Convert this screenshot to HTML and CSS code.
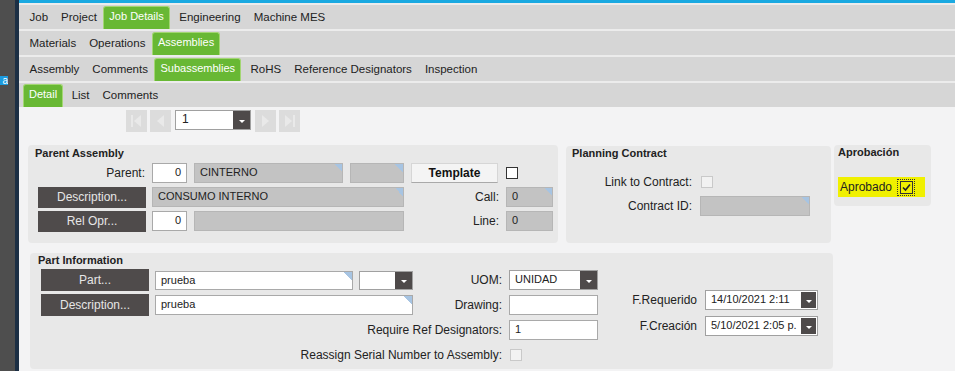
FILE: index.html
```html
<!DOCTYPE html>
<html>
<head>
	<meta charset="UTF-8">
	<title>Job Entry - Subassemblies</title>
	<link rel="stylesheet" href="styles.css">
</head>
<body>
	<div class="app">
		<div class="sidebar"><span class="side-badge">a</span></div>
		<div class="main">
			<div class="tabs">
				<div class="tab-row">
					<span class="tab">Job</span>
					<span class="tab">Project</span>
					<span class="tab active">Job Details</span>
					<span class="tab">Engineering</span>
					<span class="tab">Machine MES</span>
				</div>
				<div class="tab-row">
					<span class="tab">Materials</span>
					<span class="tab">Operations</span>
					<span class="tab active">Assemblies</span>
				</div>
				<div class="tab-row">
					<span class="tab">Assembly</span>
					<span class="tab">Comments</span>
					<span class="tab active">Subassemblies</span>
					<span class="tab">RoHS</span>
					<span class="tab">Reference Designators</span>
					<span class="tab">Inspection</span>
				</div>
				<div class="tab-row">
					<span class="tab active">Detail</span>
					<span class="tab">List</span>
					<span class="tab">Comments</span>
				</div>
			</div>

			<div class="content">
				<div class="nav">
					<span class="nav-btn">
						<svg width="21" height="22" viewBox="0 0 21 22"><rect x="5" y="5" width="2" height="12" fill="#e9e9e9"/><path d="M15 5 L8 11 L15 17 Z" fill="#e9e9e9"/></svg>
					</span>
					<span class="nav-btn">
						<svg width="21" height="22" viewBox="0 0 21 22"><path d="M14 5 L7 11 L14 17 Z" fill="#e9e9e9"/></svg>
					</span>
					<span class="combo nav-combo">
						<span class="combo-text">1</span>
						<span class="combo-btn"><i class="arrow"></i></span>
					</span>
					<span class="nav-btn">
						<svg width="21" height="22" viewBox="0 0 21 22"><path d="M7 5 L14 11 L7 17 Z" fill="#e9e9e9"/></svg>
					</span>
					<span class="nav-btn">
						<svg width="21" height="22" viewBox="0 0 21 22"><path d="M6 5 L13 11 L6 17 Z" fill="#e9e9e9"/><rect x="14" y="5" width="2" height="12" fill="#e9e9e9"/></svg>
					</span>
				</div>

				<div class="groups">
					<div class="group parent">
						<div class="group-title">Parent Assembly</div>
						<div class="rows">
							<div class="row">
								<span class="label-cell">Parent:</span>
								<span class="field num w35 gap6">0</span>
								<span class="field gray corner w149 gap7">CINTERNO</span>
								<span class="field gray corner w54 gap7"></span>
								<span class="btn-light gap7">Template</span>
								<span class="check gap8"></span>
							</div>
							<div class="row">
								<span class="btn-dark">Description...</span>
								<span class="field gray corner w252 gap6">CONSUMO INTERNO</span>
								<span class="side-label">Call:</span>
								<span class="field gray corner w47 gap7">0</span>
							</div>
							<div class="row">
								<span class="btn-dark">Rel Opr...</span>
								<span class="field num w35 gap6">0</span>
								<span class="field gray w210 gap7"></span>
								<span class="side-label">Line:</span>
								<span class="field gray w47 gap7">0</span>
							</div>
						</div>
					</div>

					<div class="group planning">
						<div class="group-title">Planning Contract</div>
						<div class="rows contract-rows">
							<div class="row">
								<span class="contract-label">Link to Contract:</span>
								<span class="check disabled contract-check"></span>
							</div>
							<div class="row">
								<span class="contract-label">Contract ID:</span>
								<span class="field gray corner w110 gap8"></span>
							</div>
						</div>
					</div>

					<div class="group approval">
						<div class="group-title">Aprobación</div>
						<div class="approved">
							<span>Aprobado</span>
							<span class="focus-box">
								<span class="check checked">
									<svg width="11" height="11" viewBox="0 0 11 11"><path d="M2 5.5 L4.5 8 L9 2.5" fill="none" stroke="#222" stroke-width="1.6"/></svg>
								</span>
							</span>
						</div>
					</div>
				</div>

				<div class="group part">
					<div class="group-title">Part Information</div>
					<div class="part-body">
						<div class="part-grid">
							<div class="cell-a">
								<span class="btn-dark tall">Part...</span>
								<span class="field corner w198 h19 gap6">prueba</span>
								<span class="combo w54 h19 gap6">
									<span class="combo-text"></span>
									<span class="combo-btn"><i class="arrow"></i></span>
								</span>
							</div>
							<span class="grid-label">UOM:</span>
							<span class="combo w89">
								<span class="combo-text">UNIDAD</span>
								<span class="combo-btn"><i class="arrow"></i></span>
							</span>

							<div class="cell-a">
								<span class="btn-dark tall">Description...</span>
								<span class="field corner w258 gap6">prueba</span>
							</div>
							<span class="grid-label">Drawing:</span>
							<span class="field w89"></span>

							<span class="grid-label wide">Require Ref Designators:</span>
							<span class="field w89">1</span>

							<span class="grid-label wide">Reassign Serial Number to Assembly:</span>
							<span class="check disabled reassign-check"></span>
						</div>

						<div class="date-grid">
							<span class="date-label">F.Requerido</span>
							<span class="combo date-combo">
								<span class="combo-text">14/10/2021 2:11</span>
								<span class="combo-btn"><i class="arrow"></i></span>
							</span>
							<span class="date-label">F.Creación</span>
							<span class="combo date-combo">
								<span class="combo-text">5/10/2021 2:05 p.</span>
								<span class="combo-btn"><i class="arrow"></i></span>
							</span>
						</div>
					</div>
				</div>
			</div>
		</div>
	</div>
</body>
</html>
```

FILE: styles.css
```css
body {
	margin: 0;
	font-family: "Liberation Sans", Arial, sans-serif;
	font-size: 12px;
	color: #222;
	overflow: hidden;
}
.app {
	display: flex;
	height: 100vh;
}
.sidebar {
	flex: none;
	width: 15px;
	padding-top: 76px;
	background-color: #4e4e4e;
	border-right: 4px solid #1c2f44;
}
.side-badge {
	display: block;
	width: 8px;
	height: 9px;
	background-color: #1b9be0;
	color: #fff;
	font-size: 10px;
	line-height: 9px;
	text-align: right;
	overflow: hidden;
}
.main {
	flex: 1;
	background-color: #f3f3f4;
	border-top: 3px solid #1aa9e1;
}

/* tab strips */
.tabs {
	display: flex;
	flex-direction: column;
	gap: 2px;
	padding-top: 2px;
	background-color: #ececec;
}
.tab-row {
	display: flex;
	align-items: flex-end;
	height: 24px;
	padding-left: 4px;
	background-color: #d6d6d6;
}
.tab {
	height: 23px;
	line-height: 23px;
	padding: 0 6.5px;
	font-size: 11.5px;
	color: #222;
	white-space: nowrap;
}
.tab.active {
	box-sizing: border-box;
	margin-right: 3px;
	padding: 0 5px;
	border: 1px solid #a3d673;
	border-bottom: none;
	border-radius: 3px 3px 0 0;
	background-color: #68b834;
	color: #fff;
	font-size: 11px;
	line-height: 19px;
}
.tab-row .tab.active:first-child {
	margin-right: 2px;
}

.content {
	padding: 3px 0 0 9px;
}

/* record navigator */
.nav {
	display: flex;
	gap: 3px;
	height: 22px;
	margin-left: 98px;
}
.nav-btn {
	width: 21px;
	height: 22px;
	background-color: #dcdcdc;
}
.nav-btn svg {
	display: block;
}
.nav-combo {
	width: 76px;
	height: 21px;
	margin: 0 1px;
}
.nav-combo .combo-text {
	font-size: 12px;
	padding-left: 6px;
}

/* group boxes */
.groups {
	display: flex;
	align-items: flex-start;
	margin-top: 13px;
}
.group {
	box-sizing: border-box;
	background-color: #e8e8e8;
	border-radius: 4px;
}
.group-title {
	font-size: 11px;
	font-weight: bold;
	line-height: 13px;
	color: #222;
}
.parent {
	width: 530px;
	height: 98px;
	margin-right: 8px;
	padding: 2px 0 0 7px;
}
.parent .rows {
	margin: 2px 0 0 3px;
}
.rows {
	display: flex;
	flex-direction: column;
	gap: 2px;
}
.row {
	display: flex;
	align-items: center;
	height: 22px;
}
.label-cell {
	width: 107px;
	padding-right: 1px;
	text-align: right;
}
.side-label {
	width: 95px;
	text-align: right;
}
.planning {
	width: 265px;
	height: 97px;
	margin: 1px 3px 0 0;
	padding: 1px 0 0 6px;
}
.contract-rows {
	margin-top: 11px;
}
.contract-label {
	width: 120px;
	text-align: right;
}
.contract-check {
	width: 13px;
	height: 13px;
	margin-left: 9px;
}
.approval {
	width: 97px;
	height: 61px;
	padding: 1px 4px 0;
}
.approved {
	display: flex;
	align-items: center;
	width: 85px;
	height: 20px;
	margin-top: 18px;
	padding-left: 2px;
	background-color: #f0f000;
}
.focus-box {
	box-sizing: border-box;
	display: flex;
	align-items: center;
	justify-content: center;
	width: 18px;
	height: 17px;
	margin-left: 5px;
	border: 1px dotted #333;
}
.check.checked {
	width: 13px;
	height: 13px;
	background-color: transparent;
}
.check.checked svg {
	display: block;
}

.part {
	width: 803px;
	height: 116px;
	margin: 10px 0 0 2px;
	padding: 1px 0 0 8px;
}
.part-body {
	display: flex;
	align-items: flex-start;
	margin-top: 2px;
}
.part-grid {
	display: grid;
	grid-template-columns: 372px 96px 89px;
	grid-template-rows: repeat(4, 22px);
	row-gap: 3px;
	align-items: center;
	margin-left: 3px;
}
.cell-a {
	display: flex;
	align-items: center;
}
.grid-label {
	padding-right: 7px;
	text-align: right;
	white-space: nowrap;
}
.grid-label.wide {
	grid-column: 1 / 3;
}
.reassign-check {
	margin-left: 1px;
}
.date-grid {
	display: grid;
	grid-template-columns: 99px 113px;
	grid-template-rows: 20px 20px;
	column-gap: 8px;
	row-gap: 6px;
	align-items: center;
	margin-top: 21px;
}
.date-label {
	text-align: right;
}
.date-combo {
	height: 19px;
	border-color: #7d7d7d;
}
.date-combo .combo-btn {
	margin: 1px;
	width: 15px;
}

/* controls */
.field {
	box-sizing: border-box;
	height: 20px;
	padding: 0 5px;
	border: 1px solid #a9a9a9;
	background-color: #fff;
	font-size: 11px;
	line-height: 17px;
	white-space: nowrap;
	overflow: hidden;
}
.field.gray {
	border-color: #b6b6b6;
	background-color: #c3c3c3;
}
.field.num {
	text-align: right;
}
.field.corner {
	background-image: linear-gradient(to bottom left, #a7c4e2 50%, transparent 50%);
	background-size: 8px 8px;
	background-position: top right;
	background-repeat: no-repeat;
}
.combo {
	box-sizing: border-box;
	display: flex;
	height: 20px;
	border: 1px solid #a0a0a0;
	background-color: #fff;
}
.combo-text {
	flex: 1;
	padding-left: 5px;
	font-size: 11px;
	line-height: 16px;
	white-space: nowrap;
	overflow: hidden;
}
.combo-btn {
	display: flex;
	align-items: center;
	justify-content: center;
	width: 17px;
	background-color: #4e4a4a;
}
.arrow {
	width: 0;
	height: 0;
	margin-top: 2px;
	border-left: 3px solid transparent;
	border-right: 3px solid transparent;
	border-top: 3px solid #fff;
}
.btn-dark {
	box-sizing: border-box;
	width: 108px;
	height: 21px;
	background-color: #4f4b4b;
	color: #e6e6e6;
	line-height: 21px;
	text-align: center;
}
.btn-dark.tall {
	height: 22px;
	line-height: 22px;
}
.btn-light {
	box-sizing: border-box;
	width: 87px;
	height: 20px;
	border: 1px solid #d6d6d6;
	border-bottom-color: #a9a9a9;
	background-color: #f4f4f4;
	font-weight: bold;
	line-height: 18px;
	text-align: center;
	color: #111;
}
.check {
	box-sizing: border-box;
	width: 12px;
	height: 12px;
	border: 1px solid #333;
	background-color: #fff;
}
.check.disabled {
	border-color: #c9c9c9;
	background-color: #f2f2f2;
}

.w35 { width: 35px; }
.w47 { width: 47px; }
.w54 { width: 54px; }
.w89 { width: 89px; }
.w110 { width: 110px; }
.w149 { width: 149px; }
.w198 { width: 198px; }
.w210 { width: 210px; }
.w252 { width: 252px; }
.w258 { width: 258px; }
.h19 { height: 19px; }
.gap6 { margin-left: 6px; }
.gap7 { margin-left: 7px; }
.gap8 { margin-left: 8px; }
```
